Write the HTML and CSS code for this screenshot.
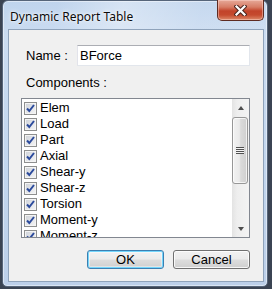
FILE: index.html
```html
<!DOCTYPE html>
<html>
<head>
<meta charset="utf-8">
<link rel="stylesheet" href="styles.css">
</head>
<body>
<div class="window">
  <div class="titlebar">
    <span class="title">Dynamic Report Table</span>
    <div class="close">
      <svg width="13" height="11" viewBox="0 0 13 11">
        <path d="M2.5 1.5 L10.5 9.5 M10.5 1.5 L2.5 9.5" stroke="#4a2620" stroke-width="4.2" stroke-linecap="square" fill="none"/>
        <path d="M2.5 1.5 L10.5 9.5 M10.5 1.5 L2.5 9.5" stroke="#ffffff" stroke-width="2.2" stroke-linecap="square" fill="none"/>
      </svg>
    </div>
  </div>
  <div class="client">
    <div class="name-row">
      <span class="lbl">Name :</span>
      <div class="input">BForce</div>
    </div>
    <div class="comp-label">Components :</div>
    <div class="list">
      <div class="items">
        <div class="item"><span class="cb"><svg width="11" height="11" viewBox="0 0 11 11"><path d="M2 5.5 L4.3 8 L9 2" stroke="#2b4a9c" stroke-width="2" fill="none"/></svg></span><span>Elem</span></div>
        <div class="item"><span class="cb"><svg width="11" height="11" viewBox="0 0 11 11"><path d="M2 5.5 L4.3 8 L9 2" stroke="#2b4a9c" stroke-width="2" fill="none"/></svg></span><span>Load</span></div>
        <div class="item"><span class="cb"><svg width="11" height="11" viewBox="0 0 11 11"><path d="M2 5.5 L4.3 8 L9 2" stroke="#2b4a9c" stroke-width="2" fill="none"/></svg></span><span>Part</span></div>
        <div class="item"><span class="cb"><svg width="11" height="11" viewBox="0 0 11 11"><path d="M2 5.5 L4.3 8 L9 2" stroke="#2b4a9c" stroke-width="2" fill="none"/></svg></span><span>Axial</span></div>
        <div class="item"><span class="cb"><svg width="11" height="11" viewBox="0 0 11 11"><path d="M2 5.5 L4.3 8 L9 2" stroke="#2b4a9c" stroke-width="2" fill="none"/></svg></span><span>Shear-y</span></div>
        <div class="item"><span class="cb"><svg width="11" height="11" viewBox="0 0 11 11"><path d="M2 5.5 L4.3 8 L9 2" stroke="#2b4a9c" stroke-width="2" fill="none"/></svg></span><span>Shear-z</span></div>
        <div class="item"><span class="cb"><svg width="11" height="11" viewBox="0 0 11 11"><path d="M2 5.5 L4.3 8 L9 2" stroke="#2b4a9c" stroke-width="2" fill="none"/></svg></span><span>Torsion</span></div>
        <div class="item"><span class="cb"><svg width="11" height="11" viewBox="0 0 11 11"><path d="M2 5.5 L4.3 8 L9 2" stroke="#2b4a9c" stroke-width="2" fill="none"/></svg></span><span>Moment-y</span></div>
        <div class="item"><span class="cb"><svg width="11" height="11" viewBox="0 0 11 11"><path d="M2 5.5 L4.3 8 L9 2" stroke="#2b4a9c" stroke-width="2" fill="none"/></svg></span><span>Moment-z</span></div>
      </div>
      <div class="scrollbar">
        <div class="sb-btn"><span class="arrow-up"></span></div>
        <div class="sb-track">
          <div class="thumb"><div class="grip"></div></div>
        </div>
        <div class="sb-btn"><span class="arrow-down"></span></div>
      </div>
    </div>
    <div class="buttons">
      <div class="btn default">OK</div>
      <div class="btn">Cancel</div>
    </div>
  </div>
</div>
</body>
</html>
```

FILE: styles.css
```css
html, body {
  margin: 0;
  padding: 0;
}
body {
  width: 272px;
  height: 289px;
  background: #3b4453;
  overflow: hidden;
  font-family: "Liberation Sans", Arial, sans-serif;
  font-size: 13px;
  color: #000;
}
.window {
  margin-left: 2px;
  width: 266px;
  height: 287px;
  box-sizing: border-box;
  border: 1px solid #56657a;
  border-radius: 6px 6px 5px 5px;
  background: linear-gradient(180deg, #bfd4ed 0%, #cbdcf1 12%, #c2d6ee 60%, #bccfe9 100%);
  display: flex;
  flex-direction: column;
  box-shadow: inset 0 0 0 1px rgba(255,255,255,0.45);
}
.titlebar {
  height: 28px;
  display: flex;
  justify-content: space-between;
  align-items: flex-start;
  background: linear-gradient(100deg, rgba(255,255,255,0) 20%, rgba(255,255,255,0.35) 45%, rgba(255,255,255,0.1) 75%);
  border-radius: 5px 5px 0 0;
}
.title {
  font-family: "Noto Sans", "Open Sans", sans-serif;
  font-size: 12px;
  line-height: 16px;
  padding: 8px 0 0 7px;
  color: #0b0b0b;
  text-shadow: 0 0 5px rgba(255,255,255,0.95), 0 0 2px rgba(255,255,255,0.9);
}
.close {
  margin-top: -1px;
  margin-right: 3px;
  width: 47px;
  height: 21px;
  box-sizing: border-box;
  border: 1px solid #5e2b22;
  border-top: none;
  border-radius: 0 0 5px 5px;
  background: linear-gradient(180deg, #e6a999 0%, #d77d66 35%, #c2432a 55%, #c54a2e 75%, #dd8a6a 100%);
  box-shadow: inset 0 0 0 1px rgba(255,220,210,0.45);
  display: flex;
  align-items: center;
  justify-content: center;
  padding-top: 1px;
}
.close svg {
  display: block;
}
.client {
  margin: 0 3px 4px 5px;
  flex: 1;
  box-sizing: border-box;
  border: 1px solid #8fa3bb;
  background: #f0f0f0;
  padding: 15px 13px 0 12px;
  display: flex;
  flex-direction: column;
}
.name-row {
  display: flex;
  align-items: center;
  height: 21px;
}
.lbl {
  width: 51px;
  padding-left: 5px;
  line-height: 16px;
  padding-top: 0;
}
.input {
  flex: 1;
  height: 21px;
  box-sizing: border-box;
  background: #fff;
  border: 1px solid #e2e6ec;
  border-top-color: #abadb3;
  border-left-color: #e2e3ea;
  padding: 1px 0 0 2px;
  line-height: 17px;
}
.comp-label {
  margin-top: 9px;
  padding-left: 5px;
  line-height: 16px;
  height: 16px;
}
.list {
  margin-top: 7px;
  height: 140px;
  box-sizing: border-box;
  border: 1px solid #828790;
  background: #fff;
  display: flex;
  overflow: hidden;
}
.items {
  flex: 1;
  padding: 1px 0 0 2px;
  overflow: hidden;
}
.item {
  height: 16px;
  display: flex;
  align-items: center;
  white-space: nowrap;
}
.item span:last-child {
  line-height: 16px;
  padding-left: 3px;
}
.cb {
  width: 13px;
  height: 13px;
  box-sizing: border-box;
  border: 1px solid #8e8f8f;
  background: linear-gradient(135deg, #cdd1d8 0%, #e2e4e8 50%, #f6f6f6 100%);
  box-shadow: inset 0 0 0 1px #f4f4f4;
  display: flex;
  align-items: center;
  justify-content: center;
}
.cb svg {
  display: block;
}
.scrollbar {
  width: 17px;
  display: flex;
  flex-direction: column;
  background: linear-gradient(90deg, #e3e3e3 0%, #eeeeee 30%, #f3f3f3 100%);
}
.sb-btn {
  height: 17px;
  display: flex;
  align-items: center;
  justify-content: center;
}
.arrow-up {
  width: 0;
  height: 0;
  border-left: 3.5px solid transparent;
  border-right: 3.5px solid transparent;
  border-bottom: 4px solid #4d4d4d;
}
.arrow-down {
  width: 0;
  height: 0;
  border-left: 3.5px solid transparent;
  border-right: 3.5px solid transparent;
  border-top: 4px solid #4d4d4d;
}
.sb-track {
  flex: 1;
  padding-top: 1px;
}
.thumb {
  margin: 0 1px 0 0;
  height: 67px;
  box-sizing: border-box;
  border: 1px solid #979797;
  border-radius: 3px;
  background: linear-gradient(90deg, #f2f2f2 0%, #eaeaea 45%, #dadada 55%, #cfcfcf 100%);
  box-shadow: inset 0 0 0 1px rgba(255,255,255,0.7);
  display: flex;
  align-items: center;
  justify-content: center;
}
.grip {
  width: 8px;
  height: 7px;
  background: repeating-linear-gradient(180deg, #505050 0px, #505050 1px, #f4f4f4 1px, #f4f4f4 2px);
}
.buttons {
  margin-top: 12px;
  display: flex;
  justify-content: flex-end;
  gap: 9px;
}
.btn {
  width: 77px;
  height: 19px;
  box-sizing: border-box;
  border: 1px solid #707070;
  border-radius: 3px;
  background: linear-gradient(180deg, #f2f2f2 0%, #ebebeb 48%, #dddddd 52%, #cfcfcf 100%);
  box-shadow: inset 0 0 0 1px rgba(255,255,255,0.8);
  text-align: center;
  line-height: 17px;
}
.btn.default {
  border-color: #3c7fb1;
  box-shadow: inset 0 0 0 1px #74d6fc, inset 0 0 0 2px rgba(255,255,255,0.4);
}
```
